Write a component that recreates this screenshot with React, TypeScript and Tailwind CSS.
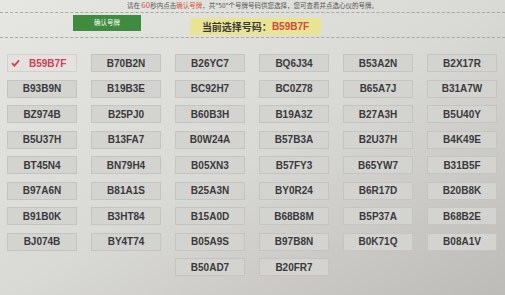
import React from "react";

const plates = [
  "B59B7F","B70B2N","B26YC7","BQ6J34","B53A2N","B2X17R",
  "B93B9N","B19B3E","BC92H7","BC0Z78","B65A7J","B31A7W",
  "BZ974B","B25PJ0","B60B3H","B19A3Z","B27A3H","B5U40Y",
  "B5U37H","B13FA7","B0W24A","B57B3A","B2U37H","B4K49E",
  "BT45N4","BN79H4","B05XN3","B57FY3","B65YW7","B31B5F",
  "B97A6N","B81A1S","B25A3N","BY0R24","B6R17D","B20B8K",
  "B91B0K","B3HT84","B15A0D","B68B8M","B5P37A","B68B2E",
  "BJ074B","BY4T74","B05A9S","B97B8N","B0K71Q","B08A1V",
  "B50AD7","B20FR7",
];

export default function App() {
  return (
    <div className="w-[505px] h-[295px] overflow-hidden bg-linear-to-br from-[#e6e6e3] via-[#d9d9d6] to-[#bdbbb7] font-['Noto_Sans_CJK_SC',sans-serif] text-[#333]">
      <div className="h-[11px] flex justify-center items-start">
        <p className="text-[6.5px] leading-[9px] text-[#555] whitespace-nowrap">
          请在 <span className="text-[#d9533f] text-[8px]">60</span>秒内点击<span className="text-[#d9533f]">确认号牌</span>，共"50"个号牌号码供您选择，您可查看并点选心仪的号牌。
        </p>
      </div>
      <div className="border-t border-dashed border-[#a8a8a4] mt-[1px]" />
      <div className="flex items-start h-[23px]">
        <div className="ml-[73px] mt-[2px] w-[68px] h-[16px] bg-[#3f8b40] flex items-center justify-center text-white text-[6.5px]">
          确认号牌
        </div>
        <div className="ml-[49px] mt-[5px] w-[131px] h-[17px] bg-[#e9e494] flex items-center justify-center text-[10px] font-bold text-[#3a3a3a] whitespace-nowrap">
          当前选择号码：<span className="text-[#cf4a3a] font-['Liberation_Sans',sans-serif]">B59B7F</span>
        </div>
      </div>
      <div className="border-t border-dashed border-[#a8a8a4] mt-[1px]" />
      <div className="ml-[7px] mt-[16px] w-[490px] flex flex-wrap justify-center gap-x-[14px] gap-y-[7.5px] font-['Liberation_Sans',sans-serif]">
        {plates.map((p, i) =>
          i === 0 ? (
            <div
              key={p}
              className="w-[70px] h-[18px] bg-[#e4e1e0] border border-[#d2cfce] flex items-center text-[10px] font-bold text-[#cf4250]"
            >
              <svg width="9" height="8" viewBox="0 0 9 8" className="ml-[3px] mr-[9px]">
                <path d="M1 4.2 L3.4 6.6 L8 1.4" fill="none" stroke="#cf4250" strokeWidth="1.8" />
              </svg>
              {p}
            </div>
          ) : (
            <div
              key={p}
              className="w-[70px] h-[18px] bg-[#d3d3d0] border border-[#c4c4c1] flex items-center justify-center text-[10px] font-bold text-[#3a3a3c]"
            >
              {p}
            </div>
          )
        )}
      </div>
    </div>
  );
}
